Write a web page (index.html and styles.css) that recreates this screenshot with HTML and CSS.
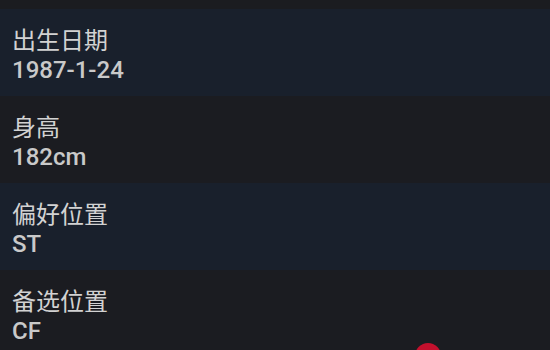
FILE: index.html
```html
<!DOCTYPE html>
<html lang="zh">
<head>
<meta charset="utf-8">
<link rel="stylesheet" href="styles.css">
</head>
<body>
<div class="topbar"></div>
<div class="list">
  <div class="row alt"><div class="label">出生日期</div><div class="value">1987-1-24</div></div>
  <div class="row"><div class="label">身高</div><div class="value">182cm</div></div>
  <div class="row alt"><div class="label">偏好位置</div><div class="value">ST</div></div>
  <div class="row"><div class="label">备选位置</div><div class="value">CF</div></div>
</div>
<div class="fab"></div>
</body>
</html>
```
FILE: styles.css
```css
html, body {
  margin: 0;
  padding: 0;
  background: #1b1c21;
  width: 550px;
  height: 350px;
  overflow: hidden;
  position: relative;
}
.topbar {
  height: 9px;
  background: #1b1c20;
}
.list {
  display: flex;
  flex-direction: column;
}
.row {
  height: 87px;
  box-sizing: border-box;
  padding: 13px 12px 0;
  background: #1b1c21;
}
.row.alt {
  background: #19202c;
}
.label {
  font-family: "Noto Sans CJK SC", sans-serif;
  font-size: 24px;
  line-height: 33px;
  color: #d2d2d2;
}
.value {
  font-family: Roboto, "Noto Sans CJK SC", sans-serif;
  font-weight: 500;
  font-size: 24px;
  line-height: 30px;
  color: #c9c9c9;
}
.fab {
  position: absolute;
  left: 415px;
  top: 343px;
  width: 26px;
  height: 26px;
  border-radius: 50%;
  background: #c3102d;
}
```
